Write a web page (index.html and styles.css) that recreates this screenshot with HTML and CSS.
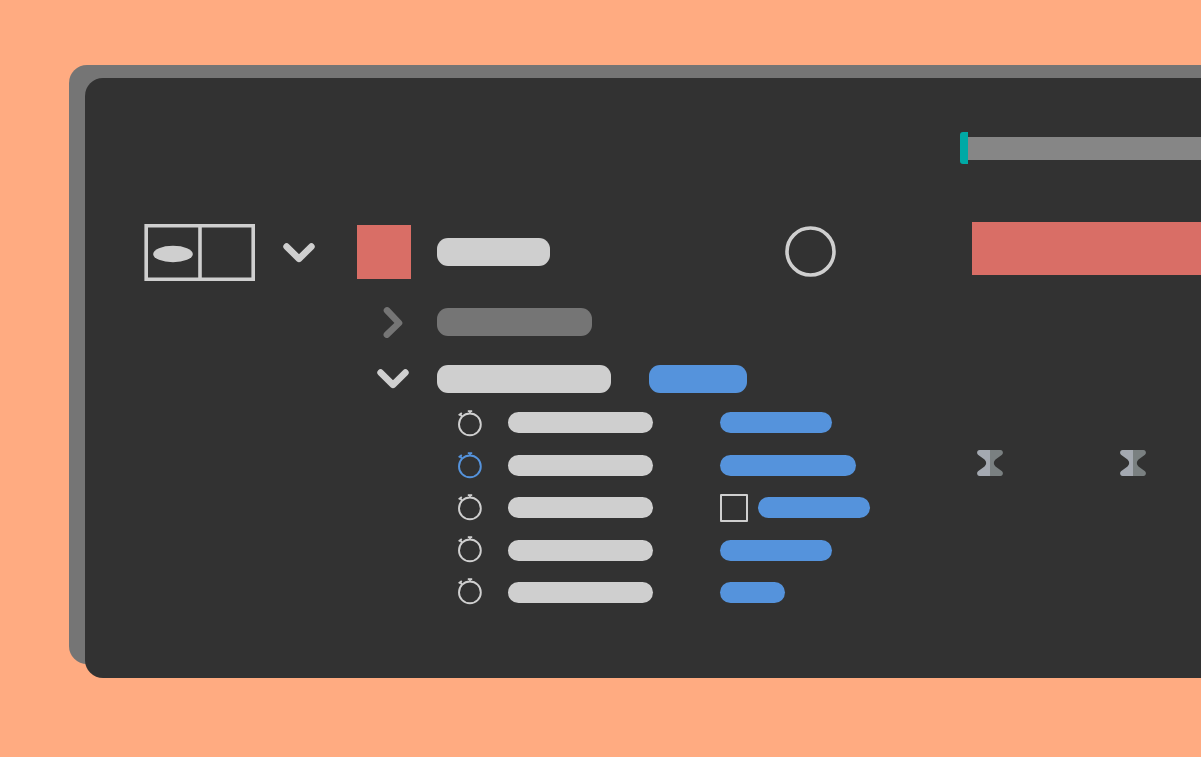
FILE: index.html
```html
<!DOCTYPE html>
<html lang="en">
<head>
<meta charset="utf-8">
<meta name="viewport" content="width=device-width, initial-scale=1">
<title>Timeline panel</title>
<link rel="stylesheet" href="styles.css">
</head>
<body>
<svg class="defs" aria-hidden="true">
  <symbol id="chevron-down" viewBox="0 0 32 22"><path d="M3.6 4.6 16 16.8 28.4 4.6" fill="none" stroke="currentColor" stroke-width="6.6" stroke-linecap="round" stroke-linejoin="round"/></symbol>
  <symbol id="chevron-right" viewBox="0 0 20 32"><path d="M4 4.400 16 17 3.900 28.700" fill="none" stroke="currentColor" stroke-width="6.600" stroke-linecap="round" stroke-linejoin="round"/></symbol>
  <symbol id="stopwatch" viewBox="0 0 24 27">
    <circle cx="11.9" cy="14.4" r="10.9" fill="none" stroke="currentColor" stroke-width="1.9"/>
    <path d="M9.8.2h4.400v1.700h-1.300v2h-1.800v-2H9.800zM.2 4.500 3.300 2.300 4.300 3.700 3.500 4.400 4.700 6 3.200 7.200 2 5.500 1.100 6.100z" fill="currentColor"/>
  </symbol>
  <symbol id="keyframe" viewBox="0 0 26 26">
    <path d="M13 0H2.600C.2 0-.8 3.200 1 4.800L7.500 9.600Q10.900 13 7.500 16.400L1 21.200C-.8 22.800.2 26 2.600 26H13z" fill="#a4a9b1"/>
    <path d="M13 0h10.400C25.800 0 26.800 3.200 25 4.800L18.500 9.600Q15.100 13 18.500 16.400L25 21.200C26.800 22.800 25.800 26 23.400 26H13z" fill="#7a8081"/>
  </symbol>
</svg>
<main class="stage">
  <div class="backdrop"></div>
  <section class="panel" aria-label="Timeline">
    <div class="outline">
      <div class="layer">
        <button class="icon-button" aria-label="Visibility">
          <svg class="switches" viewBox="0 0 111 58"><path d="M2.200 2.700H109.200V56.200H2.200zM56 2.700V56.200" fill="none" stroke="currentColor" stroke-width="3.600"/><ellipse cx="29" cy="31" rx="19.800" ry="8.300" fill="currentColor"/></svg>
        </button>
        <button class="icon-button layer-toggle" aria-label="Collapse layer"><svg class="chevron"><use href="#chevron-down"/></svg></button>
        <span class="swatch"></span>
        <span class="pill layer-name"></span>
        <button class="icon-button layer-parent" aria-label="Parent"><svg class="ring" viewBox="0 0 52 52"><circle cx="25.500" cy="25.500" r="23.500" fill="none" stroke="currentColor" stroke-width="3.600"/></svg></button>
      </div>
      <div class="group group-closed">
        <button class="icon-button group-toggle muted" aria-label="Expand group"><svg class="chevron-side"><use href="#chevron-right"/></svg></button>
        <span class="pill pill-muted group-name"></span>
      </div>
      <div class="group group-open">
        <button class="icon-button group-toggle" aria-label="Collapse group"><svg class="chevron"><use href="#chevron-down"/></svg></button>
        <span class="pill group-name-wide"></span>
        <span class="pill pill-blue group-action"></span>
      </div>
      <div class="properties">
        <div class="watches">
          <button class="icon-button" aria-label="Animate property 1"><svg class="watch"><use href="#stopwatch"/></svg></button>
          <button class="icon-button active" aria-label="Animate property 2"><svg class="watch"><use href="#stopwatch"/></svg></button>
          <button class="icon-button" aria-label="Animate property 3"><svg class="watch"><use href="#stopwatch"/></svg></button>
          <button class="icon-button" aria-label="Animate property 4"><svg class="watch"><use href="#stopwatch"/></svg></button>
          <button class="icon-button" aria-label="Animate property 5"><svg class="watch"><use href="#stopwatch"/></svg></button>
        </div>
        <div class="column names">
          <span class="bar"></span>
          <span class="bar"></span>
          <span class="bar"></span>
          <span class="bar"></span>
          <span class="bar"></span>
        </div>
        <div class="column values">
          <div class="value"><span class="bar bar-medium"></span></div>
          <div class="value"><span class="bar bar-long"></span></div>
          <div class="value"><input class="check" type="checkbox" aria-label="Link values"><span class="bar bar-medium"></span></div>
          <div class="value"><span class="bar bar-medium"></span></div>
          <div class="value"><span class="bar bar-short"></span></div>
        </div>
      </div>
    </div>
    <div class="tracks">
      <div class="ruler"><span class="ruler-handle"></span><span class="ruler-range"></span></div>
      <div class="clip"></div>
      <div class="keyframes">
        <svg class="keyframe"><use href="#keyframe"/></svg>
        <svg class="keyframe"><use href="#keyframe"/></svg>
      </div>
    </div>
  </section>
</main>
</body>
</html>
```
FILE: styles.css
```css
* { box-sizing: border-box; }

body {
  margin: 0;
  min-height: 100vh;
  background: #ffab81;
  color: #cfcfcf;
  font-family: "Liberation Sans", sans-serif;
}

svg { display: block; }

.defs {
  position: absolute;
  width: 0;
  height: 0;
}

.stage {
  display: grid;
  grid-template-columns: minmax(0, 1fr);
  padding: 65px 0 79px 69px;
  overflow: hidden;
}

.backdrop,
.panel {
  grid-area: 1 / 1;
  border-radius: 18px 0 0 18px;
}

.backdrop {
  margin-bottom: 14px;
  background: #757575;
}

.panel {
  display: flex;
  margin: 13px 0 0 16px;
  background: #323232;
  overflow: hidden;
}

.outline {
  flex: none;
  width: 875px;
  padding: 145px 0 73px 59px;
}

.icon-button {
  flex: none;
  display: block;
  margin: 0;
  padding: 0;
  border: 0;
  background: none;
  color: inherit;
  cursor: pointer;
}

.layer,
.group {
  display: flex;
  align-items: center;
}

.switches { width: 111px; height: 58px; }
.chevron { width: 32px; height: 22px; }
.chevron-side { width: 20px; height: 32px; }
.ring { width: 52px; height: 52px; }

.layer-toggle {
  margin-left: 28px;
  padding-top: 2px;
}

.swatch {
  width: 54px;
  height: 54px;
  margin-left: 42px;
  background: #d96e66;
}

.pill {
  height: 28px;
  border-radius: 11px;
  background: #cfcfcf;
}

.pill-muted { background: #757575; }
.pill-blue { background: #5593dc; }

.layer-name { width: 113px; margin-left: 26px; }
.layer-parent { margin: 0 123px 0 auto; }

.group { padding-left: 233px; }
.group-closed { height: 32px; margin-top: 25px; }
.group-open { margin-top: 27px; }

.group-toggle {
  display: flex;
  justify-content: center;
  width: 32px;
  margin-right: 28px;
}

.muted { color: #757575; }
.group-name { width: 155px; }
.group-name-wide { width: 174px; }
.group-action { width: 98px; margin-left: 38px; }

.properties {
  display: flex;
  align-items: center;
  margin-top: 17px;
  padding-left: 314px;
}

.watches {
  display: grid;
  gap: 15px;
}

.watch { width: 24px; height: 27px; }
.active { color: #5593dc; }

.column {
  display: flex;
  flex-direction: column;
  justify-content: space-between;
  height: 191px;
}

.names { width: 145px; margin-left: 26px; }
.values { margin-left: 67px; }

.bar {
  height: 21px;
  border-radius: 11px;
  background: #cfcfcf;
}

.value {
  display: flex;
  align-items: center;
  gap: 10px;
  height: 21px;
}

.value .bar { background: #5593dc; }
.bar-short { width: 65px; }
.bar-medium { width: 112px; }
.bar-long { width: 136px; }

.check {
  appearance: none;
  width: 28px;
  height: 28px;
  margin: 0;
  border: 2px solid #cfcfcf;
  border-radius: 1px;
}

.tracks {
  flex: 1;
  min-width: 0;
  padding-top: 54px;
}

.ruler {
  display: flex;
  align-items: center;
}

.ruler-handle {
  width: 8px;
  height: 32px;
  border-radius: 3px 0 0 3px;
  background: #00a9a5;
}

.ruler-range {
  flex: 1;
  height: 23px;
  background: #868686;
}

.clip {
  height: 53px;
  margin: 58px 0 0 12px;
  background: #d96e66;
}

.keyframes {
  display: flex;
  gap: 117px;
  margin: 175px 0 0 17px;
}

.keyframe {
  flex: none;
  width: 26px;
  height: 26px;
}
```
